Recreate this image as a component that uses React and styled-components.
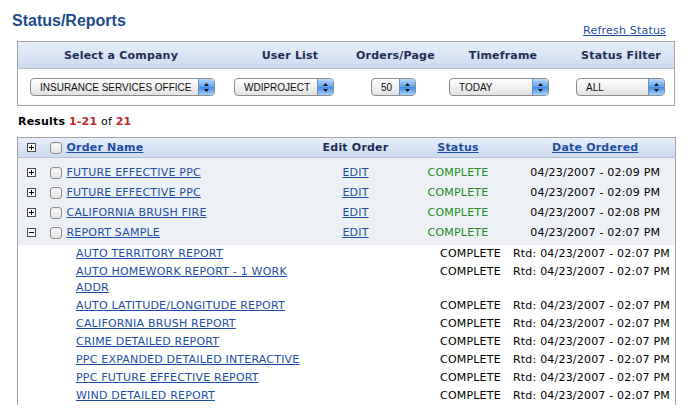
import React from 'react'
import styled, { createGlobalStyle } from 'styled-components'

const GlobalStyle = createGlobalStyle`
  body {
    margin: 0;
    background: #fff;
    font-family: "DejaVu Sans", Verdana, sans-serif;
    font-size: 11px;
    letter-spacing: 0.2px;
    color: #000;
  }
`

const Page = styled.div`
  width: 691px;
  padding: 8px 0 0 0;
`

const TopBar = styled.div`
  display: flex;
  justify-content: space-between;
  align-items: flex-start;
  padding: 0 25px 0 12px;
`

const Title = styled.h1`
  margin: 2px 0 0 0;
  font-family: "Liberation Sans", Arial, sans-serif;
  font-size: 16px;
  font-weight: bold;
  letter-spacing: 0;
  color: #1c4b8c;
  line-height: 22px;
`

const Link = styled.a`
  color: #1d4ea3;
  text-decoration: underline;
  cursor: pointer;
  font-weight: ${p => (p.$bold ? 'bold' : 'normal')};
`

const Refresh = styled(Link)`
  margin-top: 16px;
  line-height: 14px;
`

const Box = styled.div`
  margin: 3px 16px 0 17px;
  border: 1px solid #a3a3a3;
`

const filterCols = '206px 132px 74px 146px 90px 1fr'

const FilterHead = styled.div`
  display: grid;
  grid-template-columns: ${filterCols};
  height: 26px;
  align-items: center;
  background: linear-gradient(#e6eef9, #cddbef);
  border-bottom: 1px solid #b8c4d4;
  font-weight: bold;
  color: #1e2d55;
  text-align: center;
  white-space: nowrap;
`

const FilterBody = styled.div`
  display: grid;
  grid-template-columns: ${filterCols};
  height: 36px;
  align-items: center;
  justify-items: start;
`

const Select = styled.div`
  display: flex;
  align-items: center;
  width: ${p => p.$w}px;
  height: 18px;
  box-sizing: border-box;
  border: 1px solid #8c8c8c;
  border-radius: 4px;
  background: linear-gradient(#ffffff, #f0f0f0 50%, #e2e2e2);
  overflow: hidden;
  margin-left: ${p => p.$ml || 0}px;
`

const SelectText = styled.span`
  flex: 1;
  padding-left: ${p => p.$pl || 9}px;
  font-family: "Liberation Sans", Arial, sans-serif;
  font-size: 10px;
  letter-spacing: 0;
  color: #111;
  white-space: nowrap;
`

const SelectArrow = styled.span`
  width: 15px;
  height: 100%;
  display: flex;
  align-items: center;
  justify-content: center;
  background: linear-gradient(#b8d8fb, #5ea3ef 50%, #3e8ae6 51%, #a4d0fa);
  border-left: 1px solid #6a8fc0;
`

const Results = styled.div`
  margin: 9px 0 0 18px;
  line-height: 14px;
`

const Red = styled.b`
  color: #c1272d;
`

const Table = styled.table`
  margin: 8px 0 0 17px;
  width: 658px;
  table-layout: fixed;
  border-collapse: collapse;
  border: 1px solid #a3a3a3;
  border-bottom: none;
`

const HeadRow = styled.tr`
  height: 20px;
  background: linear-gradient(#e6eef9, #cddbef);
  border-bottom: 1px solid #b8c4d4;
`

const Th = styled.th`
  padding: 0;
  font-weight: bold;
  color: #1e2d55;
  white-space: nowrap;
  text-align: ${p => p.$align || 'center'};
`

const MainRow = styled.tr`
  height: 20px;
  background: #edf1f6;
`

const Spacer = styled.tr`
  height: ${p => p.$h}px;
  background: #edf1f6;
`

const Td = styled.td`
  padding: 0;
  text-align: ${p => p.$align || 'center'};
  white-space: nowrap;
`

const ExpandCell = styled.td`
  padding: 0 0 0 9px;
`

const NameCell = styled.div`
  display: flex;
  align-items: center;
  gap: 5px;
  padding-left: 5px;
`

const Check = styled.span`
  width: 12px;
  height: 12px;
  flex: none;
  box-sizing: border-box;
  border: 1px solid #8d8d8d;
  border-radius: 3px;
  background: linear-gradient(#fdfdfd, #e4e4e4);
  box-shadow: inset 0 1px 1px rgba(0, 0, 0, 0.08);
`

const Green = styled.span`
  color: #228b22;
`

const SubWrap = styled.td`
  padding: 0;
`

const SubRow = styled.div`
  display: grid;
  grid-template-columns: 58px 364px 73px 1fr;
  align-items: start;
  line-height: 16px;
  padding: 1px 0;
  white-space: nowrap;
`

const SubName = styled.div`
  max-width: 240px;
  white-space: normal;
`

const Expander = ({ open }) => (
  <svg width="9" height="9" viewBox="0 0 9 9" style={{ display: 'block' }}>
    <rect x="0.5" y="0.5" width="8" height="8" fill="#fff" stroke="#4a4a4a" />
    <path d="M2 4.5h5" stroke="#000" />
    {!open && <path d="M4.5 2v5" stroke="#000" />}
  </svg>
)

const Arrows = () => (
  <svg width="7" height="11" viewBox="0 0 7 11">
    <path d="M3.5 1L6 4H1z" fill="#111" />
    <path d="M3.5 10L6 7H1z" fill="#111" />
  </svg>
)

const filters = [
  { label: 'Select a Company', value: 'INSURANCE SERVICES OFFICE', w: 185, ml: 12 },
  { label: 'User List', value: 'WDIPROJECT', w: 100, ml: 10 },
  { label: 'Orders/Page', value: '50', w: 45, ml: 15, pl: 9 },
  { label: 'Timeframe', value: 'TODAY', w: 100, ml: 19 },
  { label: 'Status Filter', value: 'ALL', w: 89, ml: 0 }
]

const orders = [
  { name: 'FUTURE EFFECTIVE PPC', date: '04/23/2007 - 02:09 PM' },
  { name: 'FUTURE EFFECTIVE PPC', date: '04/23/2007 - 02:09 PM' },
  { name: 'CALIFORNIA BRUSH FIRE', date: '04/23/2007 - 02:08 PM' },
  { name: 'REPORT SAMPLE', date: '04/23/2007 - 02:07 PM', open: true }
]

const reports = [
  'AUTO TERRITORY REPORT',
  'AUTO HOMEWORK REPORT - 1 WORK ADDR',
  'AUTO LATITUDE/LONGITUDE REPORT',
  'CALIFORNIA BRUSH REPORT',
  'CRIME DETAILED REPORT',
  'PPC EXPANDED DETAILED INTERACTIVE',
  'PPC FUTURE EFFECTIVE REPORT',
  'WIND DETAILED REPORT'
]

export default function App() {
  return (
    <Page>
      <GlobalStyle />
      <TopBar>
        <Title>Status/Reports</Title>
        <Refresh>Refresh Status</Refresh>
      </TopBar>

      <Box>
        <FilterHead>
          {filters.map(f => (
            <div key={f.label}>{f.label}</div>
          ))}
        </FilterHead>
        <FilterBody>
          {filters.map(f => (
            <Select key={f.label} $w={f.w} $ml={f.ml}>
              <SelectText $pl={f.pl}>{f.value}</SelectText>
              <SelectArrow>
                <Arrows />
              </SelectArrow>
            </Select>
          ))}
        </FilterBody>
      </Box>

      <Results>
        <b>Results</b> <Red>1-21</Red> of <Red>21</Red>
      </Results>

      <Table>
        <colgroup>
          <col style={{ width: 27 }} />
          <col style={{ width: 266 }} />
          <col style={{ width: 90 }} />
          <col style={{ width: 115 }} />
          <col style={{ width: 160 }} />
        </colgroup>
        <thead>
          <HeadRow>
            <ExpandCell>
              <Expander />
            </ExpandCell>
            <Th $align="left">
              <NameCell>
                <Check />
                <Link $bold>Order Name</Link>
              </NameCell>
            </Th>
            <Th>Edit Order</Th>
            <Th>
              <Link $bold>Status</Link>
            </Th>
            <Th>
              <Link $bold>Date Ordered</Link>
            </Th>
          </HeadRow>
        </thead>
        <tbody>
          <Spacer $h={5}>
            <td colSpan={5} />
          </Spacer>
          {orders.map((o, i) => (
            <MainRow key={i}>
              <ExpandCell>
                <Expander open={o.open} />
              </ExpandCell>
              <Td $align="left">
                <NameCell>
                  <Check />
                  <Link>{o.name}</Link>
                </NameCell>
              </Td>
              <Td>
                <Link>EDIT</Link>
              </Td>
              <Td>
                <Green>COMPLETE</Green>
              </Td>
              <Td>{o.date}</Td>
            </MainRow>
          ))}
          <Spacer $h={2}>
            <td colSpan={5} />
          </Spacer>
          <tr>
            <SubWrap colSpan={5}>
              {reports.map(r => (
                <SubRow key={r}>
                  <span />
                  <SubName>
                    <Link>{r}</Link>
                  </SubName>
                  <span>COMPLETE</span>
                  <span>Rtd: 04/23/2007 - 02:07 PM</span>
                </SubRow>
              ))}
            </SubWrap>
          </tr>
        </tbody>
      </Table>
    </Page>
  )
}
